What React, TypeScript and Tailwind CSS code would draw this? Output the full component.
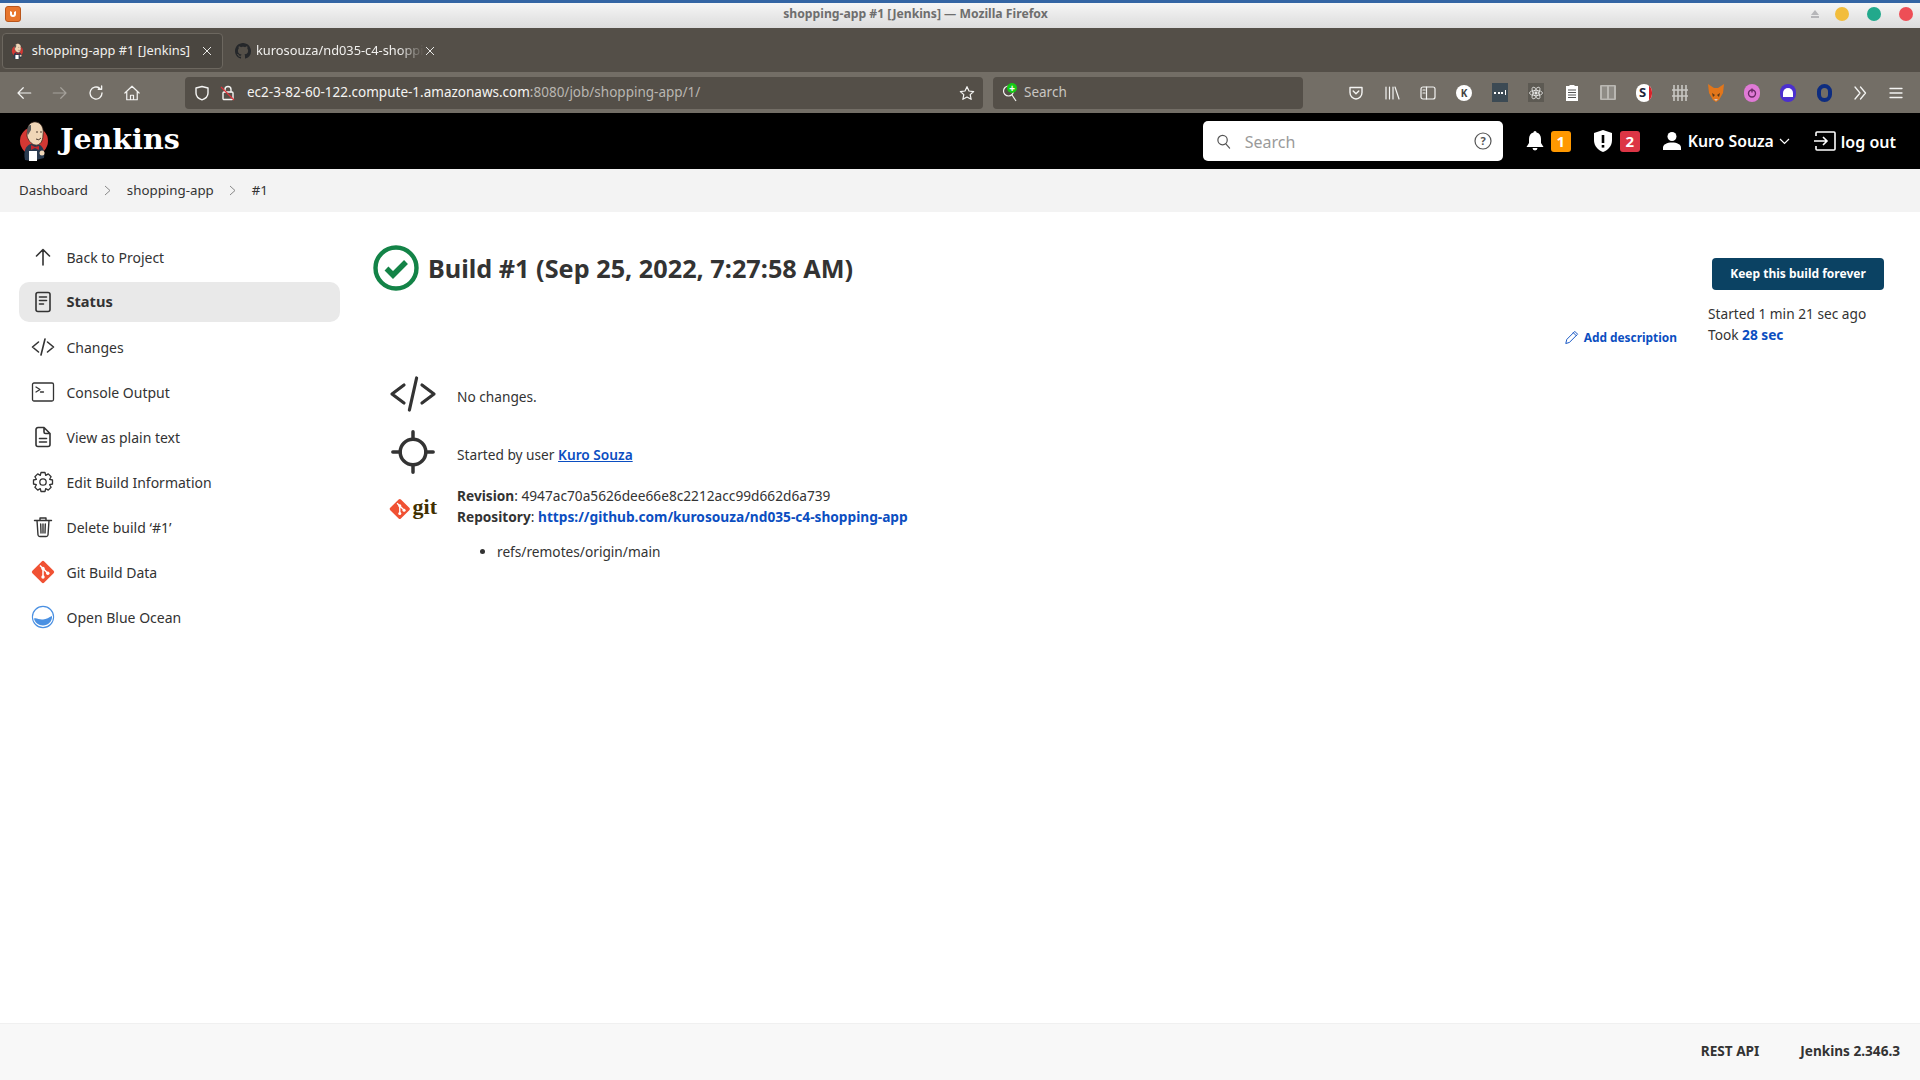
import React from "react";

const Stroke = ({ children, size = 24, color = "#333", width = 1.6, vb = "0 0 24 24" }: { children: React.ReactNode; size?: number; color?: string; width?: number; vb?: string }) => (
  <svg width={size} height={size} viewBox={vb} fill="none" stroke={color} strokeWidth={width} strokeLinecap="round" strokeLinejoin="round">{children}</svg>
);

const JenkinsLogo = ({ size }: { size: number }) => (
  <svg width={size * 0.8} height={size} viewBox="0 0 32 40">
    <circle cx="16" cy="20" r="14" fill="#d33833" />
    <path d="M7 39 C5 30 8 24 13 23 L22 24 C25 26 27 30 26 37 L14 40 Z" fill="#2a3b50" />
    <path d="M10 8 C10 3 14 0.5 18 1 C24 2 26 8 25 14 C25 20 22 25 17 24 C13 23 10 19 9 15 C9 12 9.5 10 10 8 Z" fill="#f0d6b7" stroke="#3a2a22" strokeWidth="0.8" />
    <path d="M10 14 C8 8 10 4 13 4 L13 9 C12 11 11 12 10 14 Z" fill="#5a5a5a" />
    <path d="M17 26 L13 24 L13 29 L17 27 L21 29 L21 25 Z" fill="#c5262a" />
    <path d="M18 11 L20 11 M22 11 L24 11 M18 18 Q21 20 23 17" stroke="#3a2a22" strokeWidth="0.9" fill="none" />
    <rect x="11" y="30" width="8" height="10" fill="#fff" />
    <circle cx="24" cy="32" r="2.5" fill="#f0d6b7" />
  </svg>
);

const GitDiamond = ({ size }: { size: number }) => (
  <svg width={size} height={size} viewBox="0 0 24 24">
    <rect x="3.6" y="3.6" width="16.8" height="16.8" rx="1.8" fill="#f05133" transform="rotate(45 12 12)" />
    <path d="M9 5.5 L17.5 14 M12 8.5 V17" stroke="#fff" strokeWidth="1.5" />
    <circle cx="12" cy="8.5" r="1.7" fill="#fff" />
    <circle cx="12" cy="17" r="1.7" fill="#fff" />
    <circle cx="16.8" cy="13.3" r="1.7" fill="#fff" />
  </svg>
);

const sideItems: { label: string; icon: React.ReactNode; active?: boolean }[] = [
  { label: "Back to Project", icon: <Stroke><path d="M12 20 V4.5 M5.5 11 L12 4.5 L18.5 11" /></Stroke> },
  { label: "Status", active: true, icon: <Stroke><rect x="5" y="2.5" width="14" height="19" rx="2" /><path d="M8.5 7 H15.5 M8.5 10.5 H15.5 M8.5 14 H12.5" /></Stroke> },
  { label: "Changes", icon: <Stroke><path d="M7.5 7 L1.5 12 L7.5 17 M16.5 7 L22.5 12 L16.5 17 M14 4 L10 20" /></Stroke> },
  { label: "Console Output", icon: <Stroke width={1.3}><rect x="1.5" y="3" width="21" height="18" rx="1.5" /><path d="M5 7 L9 9.5 L5 12 M9.5 12 H12.5" /></Stroke> },
  { label: "View as plain text", icon: <Stroke><path d="M13 2.5 H7 A2 2 0 0 0 5 4.5 V19.5 A2 2 0 0 0 7 21.5 H17 A2 2 0 0 0 19 19.5 V8.5 Z M13 2.5 V7 A1.5 1.5 0 0 0 14.5 8.5 H19 M8.5 13.5 H15.5 M8.5 17 H15.5" /></Stroke> },
  { label: "Edit Build Information", icon: <Stroke width={1.3}><circle cx="12" cy="12" r="3.2" /><path d="M10 2.5 H14 L14.7 5.4 L17.3 3.9 L20.1 6.7 L18.6 9.3 L21.5 10 V14 L18.6 14.7 L20.1 17.3 L17.3 20.1 L14.7 18.6 L14 21.5 H10 L9.3 18.6 L6.7 20.1 L3.9 17.3 L5.4 14.7 L2.5 14 V10 L5.4 9.3 L3.9 6.7 L6.7 3.9 L9.3 5.4 Z" /></Stroke> },
  { label: "Delete build ‘#1’", icon: <Stroke width={1.4}><path d="M3.5 5.5 H20.5 M6 5.5 L7 20 A1.8 1.8 0 0 0 8.8 21.5 H15.2 A1.8 1.8 0 0 0 17 20 L18 5.5 M9 5.5 V3 H15 V5.5 M9.7 9 L10 18 M12 9 V18 M14.3 9 L14 18" /></Stroke> },
  { label: "Git Build Data", icon: <GitDiamond size={26} /> },
  { label: "Open Blue Ocean", icon: (
    <svg width="24" height="24" viewBox="0 0 24 24"><circle cx="12" cy="12" r="10.6" fill="#fff" stroke="#4a90e2" strokeWidth="1.1" /><path d="M3 13.5 C6 12.5 8 15 12 14.5 C15.5 14 18 12.5 21 11 C21.5 16.5 17 20.5 12 20.5 C7.5 20.5 3.8 17.5 3 13.5 Z" fill="#4a90e2" /></svg>
  ) },
];

const Tool = ({ children }: { children: React.ReactNode }) => (
  <div className="w-9 h-6 flex items-center justify-center shrink-0">{children}</div>
);

const W = "#f4f4f2";

export default function App() {
  return (
    <div className="h-screen w-full flex flex-col overflow-hidden bg-white text-[#333] font-['Noto_Sans','Liberation_Sans',sans-serif]">
      {/* Title bar */}
      <div className="h-7 shrink-0 border-t-[3px] border-[#3465a4] bg-gradient-to-b from-[#f6f6f6] to-[#dcdcdc] flex items-center pb-[3px]">
        <div className="ml-[5px] w-4 h-4 rounded-[3px] bg-[#e8762d] border border-[#b9561c] flex items-center justify-center">
          <svg width="10" height="10" viewBox="0 0 10 10"><path d="M2 2 V5 A3 3 0 0 0 8 5 V2 L6 3 V5 A1 1 0 0 1 4 5 V3 Z" fill="#fff" /></svg>
        </div>
        <div className="flex-1 text-center text-[12.2px] font-bold text-[#6e6e6e] leading-none">shopping-app #1 [Jenkins] — Mozilla Firefox</div>
        <div className="flex items-center mr-[7px]">
          <svg width="10" height="8" viewBox="0 0 10 8" className="mr-[15px]"><path d="M5 0 L9 5 H1 Z M1 6 H9 V8 H1 Z" fill="#b6b6b9" /></svg>
          <div className="w-[14px] h-[14px] rounded-full bg-[#f2bd3c]" />
          <div className="w-[14px] h-[14px] rounded-full bg-[#22a98c] ml-[18px]" />
          <div className="w-[14px] h-[14px] rounded-full bg-[#ee4e56] ml-[18px]" />
        </div>
      </div>

      {/* Tab bar */}
      <div className="h-11 shrink-0 bg-[#544f48] flex items-center pl-[2px] pt-[1px] text-[12.8px] text-[#f1f0ee]">
        <div className="w-[221px] h-9 rounded-[4px] border border-[#6c675f] bg-[#4a4640] flex items-center pl-[8px] shrink-0">
          <JenkinsLogo size={16} />
          <span className="ml-[8px] whitespace-nowrap">shopping-app #1 [Jenkins]</span>
          <svg width="10" height="10" viewBox="0 0 10 10" className="ml-auto mr-[10px]" stroke="#e8e8e6" strokeWidth="1"><path d="M1 1 L9 9 M9 1 L1 9" /></svg>
        </div>
        <div className="w-[220px] h-9 flex items-center pl-[12px] shrink-0">
          <svg width="16" height="16" viewBox="0 0 16 16" fill="#25272a"><path d="M8 0C3.58 0 0 3.58 0 8c0 3.54 2.29 6.53 5.47 7.59.4.07.55-.17.55-.38 0-.19-.01-.82-.01-1.49-2.01.37-2.53-.49-2.69-.94-.09-.23-.48-.94-.82-1.13-.28-.15-.68-.52-.01-.53.63-.01 1.08.58 1.23.82.72 1.21 1.87.87 2.33.66.07-.52.28-.87.51-1.07-1.78-.2-3.64-.89-3.64-3.95 0-.87.31-1.59.82-2.15-.08-.2-.36-1.02.08-2.12 0 0 .67-.21 2.2.82.64-.18 1.32-.27 2-.27s1.36.09 2 .27c1.53-1.04 2.2-.82 2.2-.82.44 1.1.16 1.92.08 2.12.51.56.82 1.27.82 2.15 0 3.07-1.87 3.75-3.65 3.95.29.25.54.73.54 1.48 0 1.07-.01 1.93-.01 2.2 0 .21.15.46.55.38A8 8 0 0 0 16 8c0-4.42-3.58-8-8-8z" /></svg>
          <span className="ml-[5px] w-[168px] overflow-hidden whitespace-nowrap [mask-image:linear-gradient(to_right,black_85%,transparent)]">kurosouza/nd035-c4-shopping-app</span>
          <svg width="10" height="10" viewBox="0 0 10 10" className="ml-[1px]" stroke="#e8e8e6" strokeWidth="1"><path d="M1 1 L9 9 M9 1 L1 9" /></svg>
        </div>
      </div>

      {/* Nav bar */}
      <div className="h-[41px] shrink-0 bg-[#736e66] flex items-center pl-[6px] pr-[6px] text-[13.5px]">
        <div className="w-9 flex justify-center"><Stroke size={18} color={W} width={1.6}><path d="M21 12 H4 M11 5 L4 12 L11 19" /></Stroke></div>
        <div className="w-9 flex justify-center"><Stroke size={18} color="#a5a19b" width={1.6}><path d="M3 12 H20 M13 5 L20 12 L13 19" /></Stroke></div>
        <div className="w-9 flex justify-center"><Stroke size={18} color={W} width={1.8}><path d="M20 12 A8 8 0 1 1 17 5.8 M19.5 2.5 V7 H15" /></Stroke></div>
        <div className="w-9 flex justify-center"><Stroke size={18} color={W} width={1.6}><path d="M2.5 12 L12 3 L21.5 12 M5 10 V21 H19 V10 M10 21 V15 H14 V21" /></Stroke></div>
        <div className="ml-[35px] w-[798px] h-8 rounded-[4px] bg-[#544f48] flex items-center pl-[9px] pr-[8px] text-[#f4f4f2]">
          <Stroke size={16} color={W} width={1.4} vb="0 0 16 16"><path d="M8 1.5 L14 3 V8 C14 11.5 11 13.8 8 14.8 C5 13.8 2 11.5 2 8 V3 Z" /></Stroke>
          <span className="ml-[10px] relative flex">
            <Stroke size={16} color={W} width={1.4} vb="0 0 16 16"><rect x="3" y="7" width="10" height="7.5" rx="1" /><path d="M5 7 V4.5 A3 3 0 0 1 11 4.5 V7" /></Stroke>
            <svg width="16" height="16" viewBox="0 0 16 16" className="absolute inset-0"><path d="M1 2 L14 15" stroke="#e0323a" strokeWidth="1.3" /></svg>
          </span>
          <span className="ml-[11px] whitespace-nowrap">ec2-3-82-60-122.compute-1.amazonaws.com<span className="text-[#b9b6b1]">:8080/job/shopping-app/1/</span></span>
          <svg width="16" height="16" viewBox="0 0 24 24" className="ml-auto" fill="none" stroke={W} strokeWidth="1.8" strokeLinejoin="round"><path d="M12 2.5 L15 9 L22 9.8 L16.8 14.5 L18.2 21.5 L12 18 L5.8 21.5 L7.2 14.5 L2 9.8 L9 9 Z" /></svg>
        </div>
        <div className="ml-[10px] w-[310px] h-8 rounded-[4px] bg-[#544f48] flex items-center pl-[9px] text-[#c9c6c2]">
          <span className="relative flex w-[16px] h-[18px]">
            <svg width="16" height="18" viewBox="0 0 16 18" fill="none" stroke={W} strokeWidth="1.2"><circle cx="6.5" cy="7" r="5" /><path d="M10 11 L14 17" /></svg>
            <span className="absolute -top-[1px] left-[5px] w-[10px] h-[10px] rounded-full bg-[#16c916] flex items-center justify-center text-white text-[10px] leading-none font-bold">+</span>
          </span>
          <span className="ml-[6px]">Search</span>
        </div>
        <div className="ml-[35px] flex items-center">
          <Tool><Stroke size={16} color={W} width={1.4} vb="0 0 16 16"><path d="M2 2.5 H14 V7.5 A6 6.5 0 0 1 2 7.5 Z M5.2 6 L8 8.8 L10.8 6" /></Stroke></Tool>
          <Tool><Stroke size={16} color={W} width={1.2} vb="0 0 16 16"><path d="M2 2 V14 M5.5 2 V14 M9 2 V14 M11 2 L15 14" /></Stroke></Tool>
          <Tool><Stroke size={16} color={W} width={1.2} vb="0 0 16 16"><rect x="1" y="2" width="14" height="12" rx="2" /><path d="M6.5 2 V14 M3 5 H5 M3 8 H5" /></Stroke></Tool>
          <Tool><div className="w-4 h-4 rounded-full bg-white flex items-center justify-center text-[10px] font-bold text-[#444] leading-none">K</div></Tool>
          <Tool><div className="w-4 h-[19px] bg-[#3c4a54] flex items-center justify-center gap-[1.5px]"><i className="w-[2px] h-[2px] bg-white" /><i className="w-[2px] h-[2px] bg-white" /><i className="w-[2px] h-[2px] bg-white" /><i className="w-[1px] h-[5px] bg-white" /></div></Tool>
          <Tool><div className="w-4 h-[19px] bg-[#5d5a53] flex items-center justify-center"><svg width="14" height="14" viewBox="0 0 14 14" fill="none" stroke="#e6e6e4" strokeWidth="0.8"><ellipse cx="7" cy="7" rx="6.5" ry="2.6" /><ellipse cx="7" cy="7" rx="6.5" ry="2.6" transform="rotate(60 7 7)" /><ellipse cx="7" cy="7" rx="6.5" ry="2.6" transform="rotate(120 7 7)" /><circle cx="7" cy="7" r="1.2" fill="#e6e6e4" /></svg></div></Tool>
          <Tool><svg width="12" height="16" viewBox="0 0 12 16"><rect x="0" y="1" width="12" height="15" fill="#fff" /><rect x="3.5" y="0" width="5" height="2" fill="#fff" /><path d="M2 5 H10 M2 7.5 H10 M2 10 H10 M2 12.5 H10" stroke="#555" strokeWidth="1" /></svg></Tool>
          <Tool><svg width="16" height="15" viewBox="0 0 16 15"><rect x="0" y="0" width="16" height="15" rx="1" fill="#b9b7b2" /><rect x="2" y="1.5" width="5" height="12" fill="#8f8c86" /><rect x="9" y="1.5" width="5" height="12" fill="#8f8c86" /></svg></Tool>
          <Tool><div className="relative w-4 h-[18px] rounded-full bg-white overflow-hidden flex items-center justify-center text-[13px] font-bold text-[#22243a] leading-none pr-[3px]">S<span className="absolute right-0 top-0 bottom-0 w-[3px] bg-[#d8232a]" /></div></Tool>
          <Tool><svg width="16" height="16" viewBox="0 0 16 16" stroke="#c9c7c3" strokeWidth="1.6"><path d="M2 0 V16 M6 0 V16 M10 0 V16 M14 0 V16 M0 5 H16 M0 11 H16" /></svg></Tool>
          <Tool><svg width="16" height="18" viewBox="0 0 16 18"><path d="M0 0 L6 4 H10 L16 0 L15 9 L11 16 L8 18 L5 16 L1 9 Z" fill="#e2761b" /><path d="M4 9 L7 11 L5 13 Z M12 9 L9 11 L11 13 Z" fill="#5b3a1a" /><path d="M6 15 H10 L8 17 Z" fill="#d7c1b3" /></svg></Tool>
          <Tool><div className="w-4 h-[18px] rounded-full bg-[#e07ad6] flex items-center justify-center"><Stroke size={10} color="#6a2a66" width={1.4} vb="0 0 10 10"><circle cx="5" cy="5.5" r="3.5" /><path d="M5 1 V4" /></Stroke></div></Tool>
          <Tool><div className="w-4 h-[18px] rounded-full bg-[#4b2fcf] flex items-center justify-center"><span className="w-[10px] h-[9px] rounded-t-full bg-white" /></div></Tool>
          <Tool><div className="w-[15px] h-[18px] rounded-full border-[4px] border-[#0d2c80] bg-[#736e66]" /></Tool>
          <Tool><Stroke size={14} color={W} width={1.3} vb="0 0 14 14"><path d="M2 1 L7 7 L2 13 M7.5 1 L12.5 7 L7.5 13" /></Stroke></Tool>
          <Tool><Stroke size={14} color={W} width={1.3} vb="0 0 14 14"><path d="M1 2.5 H13 M1 7 H13 M1 11.5 H13" /></Stroke></Tool>
        </div>
      </div>

      {/* Jenkins header */}
      <div className="h-14 shrink-0 bg-black flex items-center text-white">
        <div className="ml-[18px]"><JenkinsLogo size={40} /></div>
        <span className="ml-[10px] -mt-[3px] text-[28.5px] font-bold font-['DejaVu_Serif',serif] leading-none">Jenkins</span>
        <div className="ml-auto w-[300px] h-10 rounded-[5px] bg-white flex items-center pl-[13px] pr-[11px]">
          <Stroke size={15} color="#555" width={1.3} vb="0 0 16 16"><circle cx="7" cy="6.5" r="5" /><path d="M10.5 10.5 L14.5 15" /></Stroke>
          <span className="ml-[14px] mt-[1px] text-[16px] text-[#9a9a9a]">Search</span>
          <svg width="18" height="18" viewBox="0 0 18 18" className="ml-auto" fill="none" stroke="#555" strokeWidth="1.2"><circle cx="9" cy="9" r="8" /><text x="9" y="13" textAnchor="middle" fontSize="11" fontWeight="700" fill="#555" stroke="none" fontFamily="Noto Sans">?</text></svg>
        </div>
        <div className="ml-[23px]">
          <svg width="18" height="20" viewBox="0 0 18 20" fill="#fff"><path d="M9 0 C10 0 10.5 .8 10.5 1.6 C13.5 2.3 15 5 15 8 V12 L17.5 16 H.5 L3 12 V8 C3 5 4.5 2.3 7.5 1.6 C7.5 .8 8 0 9 0 Z" /><path d="M6.5 17 H11.5 A2.5 2.5 0 0 1 6.5 17 Z" /></svg>
        </div>
        <div className="ml-[7px] w-5 h-[21px] rounded-[3px] bg-[#ff9800] flex items-center justify-center text-[15px] font-bold leading-none">1</div>
        <div className="ml-[23px]">
          <svg width="18" height="22" viewBox="0 0 18 22"><path d="M9 0 L18 3 V10 C18 16 14 20 9 22 C4 20 0 16 0 10 V3 Z" fill="#fff" /><rect x="7.7" y="5" width="2.6" height="8" fill="#000" /><rect x="7.7" y="15" width="2.6" height="2.6" fill="#000" /></svg>
        </div>
        <div className="ml-[8px] w-5 h-[21px] rounded-[3px] bg-[#dc3545] flex items-center justify-center text-[15px] font-bold leading-none">2</div>
        <div className="ml-[23px]">
          <svg width="18" height="18" viewBox="0 0 18 18" fill="#fff"><circle cx="9" cy="4.5" r="4.5" /><path d="M0 18 V15.5 C0 12.5 4 10.5 9 10.5 C14 10.5 18 12.5 18 15.5 V18 Z" /></svg>
        </div>
        <span className="ml-[7px] mt-[1px] text-[15.8px] font-semibold whitespace-nowrap">Kuro Souza</span>
        <svg width="11" height="7" viewBox="0 0 11 7" className="ml-[5px]" fill="none" stroke="#fff" strokeWidth="1.2"><path d="M1 1 L5.5 5.5 L10 1" /></svg>
        <svg width="22" height="20" viewBox="0 0 22 20" className="ml-[24px]" fill="none" stroke="#fff" strokeWidth="1.6"><path d="M2 5 V2 A1 1 0 0 1 3 1 H20 A1 1 0 0 1 21 2 V18 A1 1 0 0 1 20 19 H3 A1 1 0 0 1 2 18 V15 M0 10 H13 M9 6 L13 10 L9 14" /></svg>
        <span className="ml-[5px] mt-[1px] mr-[24px] text-[16px] font-semibold whitespace-nowrap">log out</span>
      </div>

      {/* Breadcrumb */}
      <div className="h-[43px] shrink-0 bg-[#f3f3f3] flex items-center pl-[19px] text-[13.3px]">
        <span>Dashboard</span>
        <svg width="7" height="11" viewBox="0 0 7 11" className="ml-[16px]" fill="none" stroke="#888" strokeWidth="1"><path d="M1 1 L6 5.5 L1 10" /></svg>
        <span className="ml-[16px]">shopping-app</span>
        <svg width="7" height="11" viewBox="0 0 7 11" className="ml-[15px]" fill="none" stroke="#888" strokeWidth="1"><path d="M1 1 L6 5.5 L1 10" /></svg>
        <span className="ml-[16px]">#1</span>
      </div>

      {/* Main */}
      <div className="flex-1 min-h-0 flex">
        <div className="w-[373px] shrink-0 pl-[19px] pt-[25px]">
          <div className="w-[321px] flex flex-col gap-[5px]">
            {sideItems.map((it) => (
              <div key={it.label} className={`h-10 rounded-[10px] flex items-center pl-[12px] ${it.active ? "bg-[#e9e9e9] font-bold text-[14.6px]" : "text-[14px]"}`}>
                <div className="w-6 h-6 flex items-center justify-center shrink-0">{it.icon}</div>
                <span className="ml-[11.5px] whitespace-nowrap">{it.label}</span>
              </div>
            ))}
          </div>
        </div>

        <div className="flex-1 flex min-w-0">
          <div className="flex-1 min-w-0 pt-[33px]">
            <div className="flex items-center h-[46px]">
              <svg width="46" height="46" viewBox="0 0 46 46" fill="none"><circle cx="23" cy="23" r="20.5" stroke="#138347" strokeWidth="4.4" /><path d="M13.5 23.5 L20 30 L33 17" stroke="#138347" strokeWidth="5.5" /></svg>
              <h1 className="ml-[9px] mt-[2px] text-[25.25px] font-bold leading-none whitespace-nowrap">Build #1 (Sep 25, 2022, 7:27:58 AM)</h1>
            </div>
            <div className="flex justify-end mt-[38px] pr-[31px]">
              <span className="flex items-center text-[11.9px] font-bold text-[#0b4ec1]">
                <Stroke size={15} color="#0b4ec1" width={1} vb="0 0 16 16"><path d="M2 14 L3 10 L11.5 1.5 L14.5 4.5 L6 13 Z M10 3 L13 6" /></Stroke>
                <span className="ml-[5px]">Add description</span>
              </span>
            </div>
            <div className="ml-[16px] mt-[23px] text-[13.7px]">
              <div className="flex items-center h-[48px]">
                <div className="w-[48px] flex justify-center"><Stroke size={48} width={1.6}><path d="M7.5 7.5 L1.5 12 L7.5 16.5 M16.5 7.5 L22.5 12 L16.5 16.5 M13.8 4 L10.2 20" /></Stroke></div>
                <span className="ml-[20px] mt-[6px]">No changes.</span>
              </div>
              <div className="flex items-center h-[48px] mt-[10px]">
                <div className="w-[48px] flex justify-center">
                  <Stroke size={44} width={1.9}><circle cx="12" cy="12" r="7" /><path d="M12 1 V5 M12 19 V23 M1 12 H5 M19 12 H23" /></Stroke>
                </div>
                <span className="ml-[20px] mt-[6px]">Started by user <span className="font-semibold text-[#0b4ec1] underline">Kuro Souza</span></span>
              </div>
              <div className="flex mt-[8px]">
                <div className="w-[48px] h-[50px] flex items-center shrink-0">
                  <GitDiamond size={22} />
                  <span className="ml-[2px] font-['Liberation_Serif',serif] font-bold text-[22px] text-[#413000] leading-none -mt-[3px]">git</span>
                </div>
                <div className="ml-[20px] pt-[1px] leading-[21px]">
                  <div><b className="font-bold">Revision</b>: 4947ac70a5626dee66e8c2212acc99d662d6a739</div>
                  <div><b className="font-bold">Repository</b>: <span className="font-bold text-[#0b4ec1]">https://github.com/kurosouza/nd035-c4-shopping-app</span></div>
                  <ul className="list-disc pl-[40px] mt-[14px]"><li>refs/remotes/origin/main</li></ul>
                </div>
              </div>
            </div>
          </div>

          <div className="w-[212px] shrink-0 pt-[46px] text-[13.7px]">
            <div className="ml-[4px] w-[172px] h-8 rounded-[4px] bg-[#0b4263] text-white flex items-center justify-center text-[12px] font-bold">Keep this build forever</div>
            <div className="mt-[13px] leading-[21px]">
              <div>Started 1 min 21 sec ago</div>
              <div>Took <span className="font-bold text-[#0b4ec1]">28 sec</span></div>
            </div>
          </div>
        </div>
      </div>

      {/* Footer */}
      <div className="h-[57px] shrink-0 bg-[#f8f8f8] border-t border-[#f0f0f0] flex items-center justify-end pr-[20px] pb-[1px] text-[13.6px] font-bold">
        <span>REST API</span>
        <span className="ml-[41px]">Jenkins 2.346.3</span>
      </div>
    </div>
  );
}
